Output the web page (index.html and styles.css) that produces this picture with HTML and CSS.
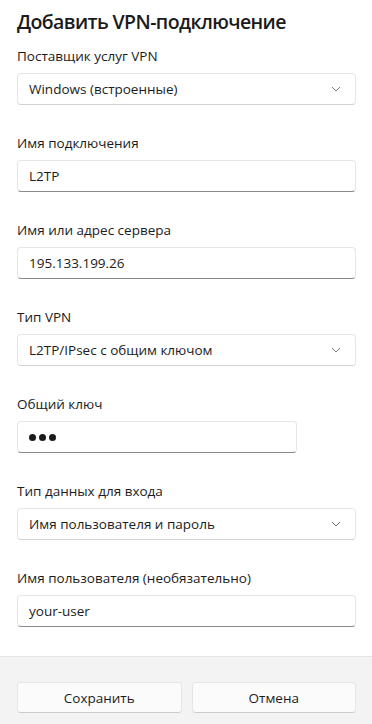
FILE: index.html
```html
<!DOCTYPE html>
<html lang="ru">
<head>
<meta charset="utf-8">
<link rel="stylesheet" href="styles.css">
</head>
<body>
<div class="dialog">
  <div class="content">
    <h1 class="title">Добавить VPN-подключение</h1>

    <div class="field">
      <div class="label">Поставщик услуг VPN</div>
      <div class="select"><span>Windows (встроенные)</span><svg class="chev" width="10" height="6" viewBox="0 0 10 6"><path d="M1 1 L5 5 L9 1" fill="none" stroke="#7a7a7a" stroke-width="1"/></svg></div>
    </div>

    <div class="field">
      <div class="label">Имя подключения</div>
      <div class="input">L2TP</div>
    </div>

    <div class="field">
      <div class="label">Имя или адрес сервера</div>
      <div class="input">195.133.199.26</div>
    </div>

    <div class="field">
      <div class="label">Тип VPN</div>
      <div class="select"><span>L2TP/IPsec с общим ключом</span><svg class="chev" width="10" height="6" viewBox="0 0 10 6"><path d="M1 1 L5 5 L9 1" fill="none" stroke="#7a7a7a" stroke-width="1"/></svg></div>
    </div>

    <div class="field">
      <div class="label">Общий ключ</div>
      <div class="input short"><span class="dots"><i></i><i></i><i></i></span></div>
    </div>

    <div class="field">
      <div class="label">Тип данных для входа</div>
      <div class="select"><span>Имя пользователя и пароль</span><svg class="chev" width="10" height="6" viewBox="0 0 10 6"><path d="M1 1 L5 5 L9 1" fill="none" stroke="#7a7a7a" stroke-width="1"/></svg></div>
    </div>

    <div class="field">
      <div class="label">Имя пользователя (необязательно)</div>
      <div class="input">your-user</div>
    </div>
  </div>
  <div class="footer">
    <button class="btn">Сохранить</button>
    <button class="btn">Отмена</button>
  </div>
</div>
</body>
</html>
```

FILE: styles.css
```css
* { box-sizing: border-box; }
html, body { margin: 0; padding: 0; }
body {
  width: 372px;
  height: 724px;
  background: #ffffff;
  font-family: "Open Sans", "Noto Sans", sans-serif;
  color: #1b1b1b;
  overflow: hidden;
}
.dialog {
  display: flex;
  flex-direction: column;
  height: 724px;
}
.content {
  flex: 1;
  padding: 8px 16px 0 17px;
  display: flex;
  flex-direction: column;
  gap: 28px;
}
.title {
  margin: 0 0 -18px 0;
  font-size: 19.5px;
  line-height: 28px;
  font-weight: 600;
  letter-spacing: -0.6px;
}
.field {
  display: flex;
  flex-direction: column;
  gap: 7px;
}
.label {
  font-size: 13.5px;
  line-height: 20px;
}
.select, .input {
  height: 32px;
  background: #ffffff;
  border: 1px solid #e6e6e6;
  border-radius: 4px;
  padding: 0 11px;
  font-size: 13.5px;
  display: flex;
  align-items: center;
}
.select {
  justify-content: space-between;
  border-bottom-color: #d2d2d2;
  padding-right: 14px;
}
.input {
  border-bottom: 1px solid #8a8a8a;
}
.input.short { width: 280px; }
.dots { display: flex; gap: 3px; }
.dots i {
  width: 7px; height: 7px; border-radius: 50%;
  background: #1b1b1b; display: block;
}
.footer {
  height: 68px;
  background: #f3f3f3;
  border-top: 1px solid #e5e5e5;
  display: flex;
  gap: 10px;
  padding: 25px 16px 0 17px;
}
.btn {
  flex: 1;
  height: 31px;
  background: #fbfbfb;
  border: 1px solid #e5e5e5;
  border-bottom-color: #cccccc;
  border-radius: 4px;
  font-family: inherit;
  font-size: 13.5px;
  color: #1b1b1b;
}
```
